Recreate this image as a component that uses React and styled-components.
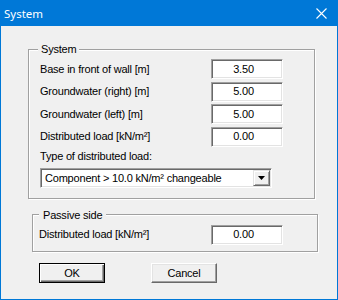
import React from "react";
import styled, { createGlobalStyle } from "styled-components";

const Global = createGlobalStyle`
  html, body { margin:0; padding:0; background:#f0f0f0; }
  body { font-family:"Liberation Sans", Arial, sans-serif; }
`;

const Win = styled.div`
  width:338px;
  height:300px;
  display:flex;
  flex-direction:column;
  background:#f0f0f0;
`;

const TitleBar = styled.div`
  height:26px;
  flex:none;
  background:#0078d7;
  color:#fff;
  display:flex;
  align-items:center;
  justify-content:space-between;
  padding:0 11px 0 4px;
  font:11.5px "Noto Sans", "Open Sans", sans-serif;
  box-sizing:border-box;
`;

const Body = styled.div`
  flex:1;
  box-sizing:border-box;
  border:1px solid #0078d7;
  border-top:none;
  padding-top:16px;
  display:flex;
  flex-direction:column;
  font-size:11px;
  letter-spacing:-0.2px;
  color:#000;
`;

const Group = styled.fieldset`
  margin:${p => p.$top || 0}px 0 0 ${p => p.$left}px;
  width:${p => p.$width}px;
  box-sizing:border-box;
  border:1px solid #a0a0a0;
  box-shadow:1px 1px 0 #fff, inset 1px 1px 0 #fff;
  padding:3px ${p => p.$padR}px ${p => p.$padB}px ${p => p.$padL}px;
  min-width:0;
`;

const Legend = styled.legend`
  padding:0 ${p => p.$pad}px;
  margin-left:${p => p.$shift}px;
  line-height:14px;
  height:14px;
  background:#f0f0f0;
`;

const Rows = styled.div`
  display:flex;
  flex-direction:column;
  gap:2.5px;
`;

const Row = styled.div`
  display:grid;
  grid-template-columns:1fr 72px;
  align-items:center;
  height:20px;
`;

const Label = styled.span`
  white-space:nowrap;
  line-height:13px;
`;

const Sunken = styled.div`
  box-sizing:border-box;
  height:20px;
  background:#fff;
  border:1px solid;
  border-color:#a0a0a0 #fff #fff #a0a0a0;
  box-shadow:inset 1px 1px 0 #696969, inset -1px -1px 0 #e3e3e3;
`;

const Field = styled(Sunken)`
  display:flex;
  align-items:center;
  justify-content:center;
  padding-right:7px;
  line-height:13px;
`;

const TypeLabel = styled(Label)`
  display:block;
  margin-top:3px;
`;

const Select = styled(Sunken)`
  width:232px;
  margin-top:5px;
  display:flex;
  align-items:stretch;
  padding:1px;
`;

const SelectText = styled.div`
  flex:1;
  display:flex;
  align-items:center;
  padding-left:3px;
  white-space:nowrap;
`;

const ArrowBtn = styled.div`
  width:17px;
  box-sizing:border-box;
  background:#f0f0f0;
  border:1px solid;
  border-color:#e3e3e3 #696969 #696969 #e3e3e3;
  box-shadow:inset 1px 1px 0 #fff, inset -1px -1px 0 #a0a0a0;
  display:flex;
  align-items:center;
  justify-content:center;
`;

const Buttons = styled.div`
  display:flex;
  gap:46px;
  margin:11px 0 0 38px;
`;

const Button = styled.button`
  width:66px;
  height:20px;
  box-sizing:border-box;
  padding:0;
  font:11px "Liberation Sans", Arial, sans-serif;
  letter-spacing:-0.2px;
  color:#000;
  background:#f0f0f0;
  border:1px solid;
  border-color:${p => (p.$default ? "#000" : "#fff #696969 #696969 #fff")};
  box-shadow:${p =>
    p.$default
      ? "inset 1px 1px 0 #fff, inset -1px -1px 0 #696969, inset -2px -2px 0 #a0a0a0"
      : "inset -1px -1px 0 #a0a0a0, inset 1px 1px 0 #e3e3e3"};
`;

const systemRows = [
  ["Base in front of wall [m]", "3.50"],
  ["Groundwater (right) [m]", "5.00"],
  ["Groundwater (left) [m]", "5.00"],
  ["Distributed load [kN/m²]", "0.00"],
];

export default function App() {
  return (
    <Win>
      <Global />
      <TitleBar>
        <span>System</span>
        <svg width="11" height="11" viewBox="0 0 11 11">
          <path d="M0.5 0.5 L10.5 10.5 M10.5 0.5 L0.5 10.5" stroke="#fff" strokeWidth="1.1" />
        </svg>
      </TitleBar>
      <Body>
        <Group $left={27} $width={287} $padL={11} $padR={31} $padB={10}>
          <Legend $pad={3} $shift={-2}>System</Legend>
          <Rows>
            {systemRows.map(([label, value]) => (
              <Row key={label}>
                <Label>{label}</Label>
                <Field>{value}</Field>
              </Row>
            ))}
          </Rows>
          <TypeLabel>Type of distributed load:</TypeLabel>
          <Select>
            <SelectText>Component &gt; 10.0 kN/m² changeable</SelectText>
            <ArrowBtn>
              <svg width="7" height="4" viewBox="0 0 7 4">
                <path d="M0 0 H7 L3.5 4 Z" fill="#000" />
              </svg>
            </ArrowBtn>
          </Select>
        </Group>
        <Group $top={9} $left={31} $width={286} $padL={6} $padR={34} $padB={6}>
          <Legend $pad={4} $shift={0}>Passive side</Legend>
          <Row>
            <Label>Distributed load [kN/m²]</Label>
            <Field>0.00</Field>
          </Row>
        </Group>
        <Buttons>
          <Button $default>OK</Button>
          <Button>Cancel</Button>
        </Buttons>
      </Body>
    </Win>
  );
}
